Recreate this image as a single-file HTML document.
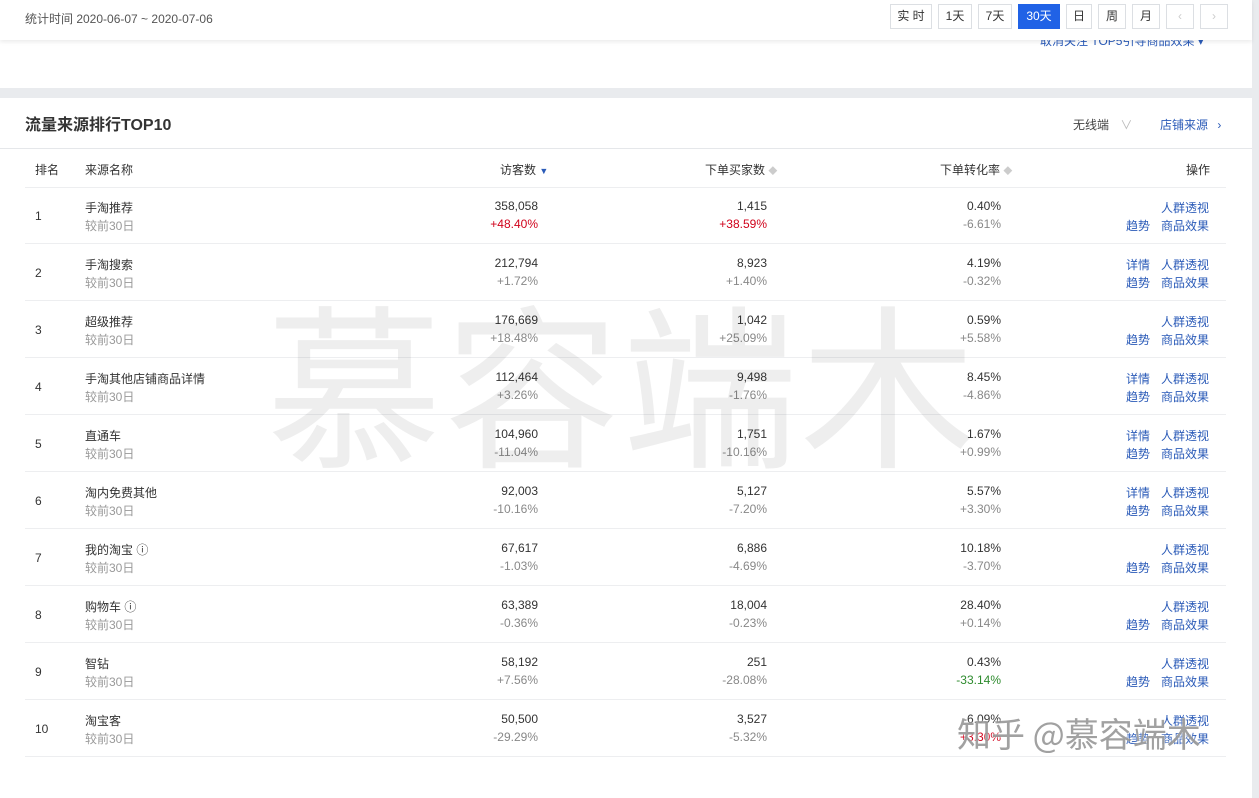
<!DOCTYPE html>
<html><head><meta charset="utf-8"><style>
*{margin:0;padding:0;box-sizing:border-box}
body{width:1259px;height:786px;overflow:hidden;background:#e9ebee;font-family:"Liberation Sans","Noto Sans CJK SC",sans-serif;font-size:12px;color:#333;position:relative}
.top{position:absolute;left:0;top:0;width:1252px;height:40px;background:#fff;box-shadow:0 2px 4px rgba(0,0,0,.08);z-index:2}
.mid{position:absolute;left:0;top:40px;width:1252px;height:48px;background:#fff}
.card{position:absolute;left:0;top:98px;width:1252px;height:700px;background:#fff}
.abs{position:absolute;white-space:nowrap}
.btn{position:absolute;top:4px;height:25px;border:1px solid #dcdfe3;background:#fff;font-size:12px;line-height:23px;text-align:center;color:#333}
.blue{color:#2b5bb8}
.r{text-align:right}
.row{position:absolute;left:25px;width:1201px;height:57px;border-bottom:1px solid #edeef0}
.g{color:#999}
.wm{position:absolute;left:266px;top:250px;font-size:176px;color:rgba(0,0,0,.065);font-family:"Noto Sans CJK SC",sans-serif;letter-spacing:2px;white-space:nowrap;z-index:5}
.zh{position:absolute;left:957px;top:708px;font-size:34px;color:rgba(130,130,130,.75);font-family:"Noto Sans CJK SC",sans-serif;white-space:nowrap;z-index:6;text-shadow:0 0 2px #fff}
</style></head><body>
<div class="top">
<div class="abs" style="left:25px;top:10px;color:#555">统计时间 2020-06-07 ~ 2020-07-06</div>
<div class="btn" style="left:890px;width:42px">实 时</div>
<div class="btn" style="left:938px;width:34px">1天</div>
<div class="btn" style="left:978px;width:34px">7天</div>
<div class="btn" style="left:1018px;width:42px;background:#2062e6;border-color:#2062e6;color:#fff">30天</div>
<div class="btn" style="left:1066px;width:26px">日</div>
<div class="btn" style="left:1098px;width:28px">周</div>
<div class="btn" style="left:1132px;width:28px">月</div>
<div class="btn" style="left:1166px;width:28px;color:#ccc">‹</div>
<div class="btn" style="left:1200px;width:28px;color:#ccc">›</div>
</div>
<div class="mid"><div class="abs blue" style="left:1040px;top:-8px;font-size:12px">取消关注 TOP5引导商品效果 ▾</div></div>
<div class="card">
<div class="abs" style="left:25px;top:13px;font-size:16px;font-weight:bold;color:#333">流量来源排行TOP10</div>
<div class="abs" style="left:1073px;top:18px;color:#444">无线端 <span style="color:#bbb;margin-left:8px">∨</span></div>
<div class="abs blue" style="left:1160px;top:18px">店铺来源 <span style="margin-left:6px">›</span></div>
<div style="position:absolute;left:0;top:50px;width:1252px;border-top:1px solid #e5e7ea"></div>
<div class="abs" style="left:35px;top:63px">排名</div>
<div class="abs" style="left:85px;top:63px">来源名称</div>
<div class="abs" style="left:500px;top:63px">访客数 <span style="color:#2b5bb8;font-size:9px">▼</span></div>
<div class="abs" style="left:705px;top:63px">下单买家数 <span style="color:#ccc;font-size:9px">◆</span></div>
<div class="abs" style="left:940px;top:63px">下单转化率 <span style="color:#ccc;font-size:9px">◆</span></div>
<div class="abs" style="left:1186px;top:63px">操作</div>
<div style="position:absolute;left:25px;top:89px;width:1201px;border-top:1px solid #edeef0"></div>
</div>
<div id="rows"></div>
<div class="wm">慕容端木</div>
<div class="zh">知乎 @慕容端木</div>
<script>
var d=[["手淘推荐","358,058","+48.40%","1,415","+38.59%","0.40%","-6.61%",0,"r","r",""],
["手淘搜索","212,794","+1.72%","8,923","+1.40%","4.19%","-0.32%",1,"","",""],
["超级推荐","176,669","+18.48%","1,042","+25.09%","0.59%","+5.58%",0,"","",""],
["手淘其他店铺商品详情","112,464","+3.26%","9,498","-1.76%","8.45%","-4.86%",1,"","",""],
["直通车","104,960","-11.04%","1,751","-10.16%","1.67%","+0.99%",1,"","",""],
["淘内免费其他","92,003","-10.16%","5,127","-7.20%","5.57%","+3.30%",1,"","",""],
["我的淘宝 ⓘ","67,617","-1.03%","6,886","-4.69%","10.18%","-3.70%",0,"","",""],
["购物车 ⓘ","63,389","-0.36%","18,004","-0.23%","28.40%","+0.14%",0,"","",""],
["智钻","58,192","+7.56%","251","-28.08%","0.43%","-33.14%",0,"","","gr"],
["淘宝客","50,500","-29.29%","3,527","-5.32%","-6.09%","+3.30%",0,"","","r"]];
var h="";
d.forEach(function(x,i){var t=187+i*57;
function c(k){return k=="r"?"#d0021b":k=="gr"?"#2e8b2e":"#888"}
h+='<div class="row" style="top:'+t+'px"></div>';
h+='<div class="abs" style="left:35px;top:'+(t+22)+'px">'+(i+1)+'</div>';
h+='<div class="abs" style="left:85px;top:'+(t+12)+'px">'+x[0]+'</div><div class="abs g" style="left:85px;top:'+(t+30)+'px">较前30日</div>';
[[538,1,2,8],[767,3,4,9],[1001,5,6,10]].forEach(function(p){
h+='<div class="abs r" style="right:'+(1259-p[0])+'px;top:'+(t+12)+'px">'+x[p[1]]+'</div><div class="abs r" style="right:'+(1259-p[0])+'px;top:'+(t+30)+'px;color:'+c(x[p[3]])+'">'+x[p[2]]+'</div>';});
if(x[7])h+='<div class="abs blue" style="left:1126px;top:'+(t+12)+'px">详情</div>';
h+='<div class="abs blue" style="left:1161px;top:'+(t+12)+'px">人群透视</div><div class="abs blue" style="left:1126px;top:'+(t+30)+'px">趋势</div><div class="abs blue" style="left:1161px;top:'+(t+30)+'px">商品效果</div>';
});
document.getElementById("rows").innerHTML=h;
</script>
</body></html>
